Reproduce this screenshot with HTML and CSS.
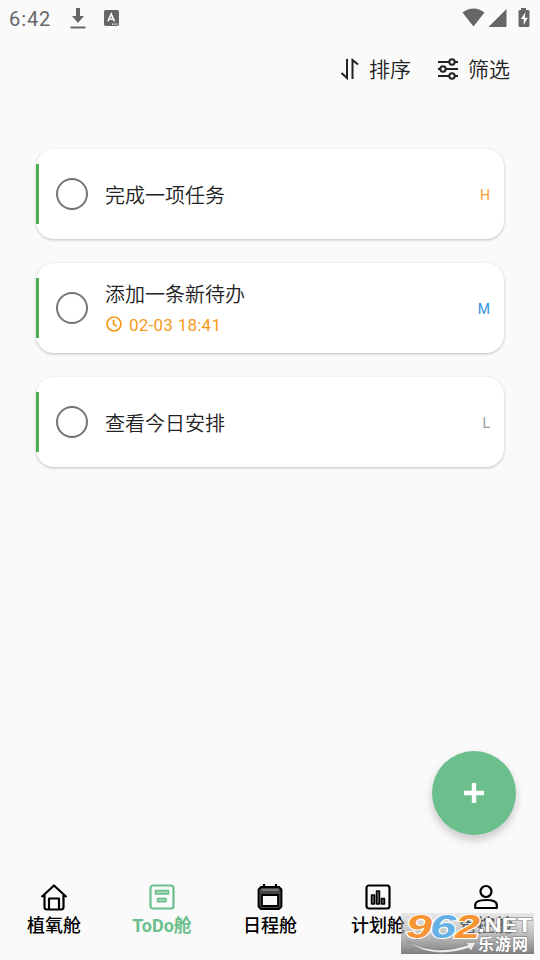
FILE: index.html
```html
<!DOCTYPE html>
<html lang="zh-CN">
<head>
<meta charset="utf-8">
<title>ToDo舱</title>
<link rel="stylesheet" href="styles.css">
</head>
<body>
<div class="app">
  <header class="status">
    <span class="clock">6:42</span>
    <svg class="download" width="16" height="21" viewBox="0 0 16 21"><path d="M6 0h4v8h4l-6 7-6-7h4zM.5 18.500h15v2H.5z"/></svg>
    <svg class="keyboard" width="15" height="16" viewBox="0 0 15 16"><rect width="15" height="16" rx="1.8"/><path d="M4 11.200 7.200 4l3.200 7.200M5 9h4.400" fill="none" stroke="#fff" stroke-width="1.600"/><path d="M8 13.500h1.200v1.200H8zM10.200 13.500h1.200v1.200h-1.200zM12.300 13.500h1.200v1.200h-1.200z" fill="#fff"/></svg>
    <svg class="signals" width="68" height="20" viewBox="0 0 68 20"><path d="M.5 4.500Q11.500-3.500 22.500 4.500L11.500 18.500zM26.500 19 44.500 1v18zM59 0h5v2h2q1.500 0 1.500 1.500v14q0 1.500-1.500 1.500h-8q-1.500 0-1.500-1.500v-14q0-1.500 1.500-1.500h1z"/><path d="m63.500 4-4.500 7h2.700v6l4-7.300h-3z" fill="#fff"/></svg>
  </header>

  <div class="toolbar">
    <button class="tool"><svg width="20" height="22" viewBox="0 0 20 22"><path d="M7 1v19L1.500 15M12.500 21V2l5.500 4.500"/></svg><span>排序</span></button>
    <button class="tool filter"><svg width="22" height="22" viewBox="0 0 22 22"><path d="M1 4h11M18 4h3M1 11h2M9 11h12M1 18h11M18 18h3"/><circle cx="15" cy="4" r="2.700"/><circle cx="6" cy="11" r="2.700"/><circle cx="15" cy="18" r="2.700"/></svg><span>筛选</span></button>
  </div>

  <main class="tasks">
    <article class="task"><i class="check"></i><div class="body"><h2>完成一项任务</h2></div><span class="level high">H</span></article>
    <article class="task"><i class="check"></i><div class="body"><h2>添加一条新待办</h2><p class="due"><svg width="16" height="16" viewBox="0 0 16 16"><circle cx="8" cy="8" r="7"/><path d="M7.600 3.700v4.500l3.400 2.200"/></svg><time>02-03 18:41</time></p></div><span class="level medium">M</span></article>
    <article class="task"><i class="check"></i><div class="body"><h2>查看今日安排</h2></div><span class="level low">L</span></article>
  </main>

  <button class="add" aria-label="+"><svg width="20" height="20" viewBox="0 0 20 20"><path d="M10 2v16M2 10h16"/></svg></button>

  <nav class="tabs">
    <a class="tab"><svg viewBox="0 0 28 28"><path d="M1.500 14 14 2.500 26.500 14M4.500 12v12q0 2.500 2.500 2.500h14q2.500 0 2.500-2.500V12M9 26V15.500h10V26"/></svg><span>植氧舱</span></a>
    <a class="tab active"><svg viewBox="0 0 28 28"><rect x="2.500" y="2.500" width="23" height="23" rx="2.500"/><path class="thin" d="M7.500 7.500h13v3.500h-13zM9.500 15.500h8.500v3.200H9.500z"/></svg><span>ToDo舱</span></a>
    <a class="tab"><svg viewBox="0 0 28 28"><path class="frame" fill-rule="evenodd" d="M5 4h18l2.500 2.500v17L23 26H5l-2.500-2.500v-17zM6 12v11h16V12z"/><path d="M8 1v4M20 1v4"/><path class="line" d="M5.500 7h17"/></svg><span>日程舱</span></a>
    <a class="tab"><svg viewBox="0 0 28 28"><rect x="2.500" y="2.500" width="23" height="23" rx="2.500"/><path class="thin" d="M7.500 12h3v9h-3zM12.500 8h3v13h-3zM17.500 15.500h3V21h-3z"/></svg><span>计划舱</span></a>
    <a class="tab"><svg viewBox="0 0 28 28"><circle cx="14" cy="8.500" r="5.500"/><path d="M3.200 25v-3q0-5 10.800-5t10.800 5v3z"/></svg><span>管控舱</span></a>
  </nav>

  <svg class="mark" width="133" height="41" viewBox="0 0 133 41">
    <defs><linearGradient id="shade" x2="0" y2="1"><stop stop-color="#bbb" stop-opacity=".3"/><stop offset=".4" stop-color="#aaa" stop-opacity=".6"/><stop offset="1" stop-color="#777" stop-opacity=".95"/></linearGradient></defs>
    <rect width="133" height="41" fill="url(#shade)"/>
    <g class="digits"><text x="5" y="25" textLength="26" lengthAdjust="spacingAndGlyphs" fill="#f79434">9</text><text x="29" y="25" textLength="26" lengthAdjust="spacingAndGlyphs" fill="#65b1e6">6</text><text x="54" y="25" textLength="25" lengthAdjust="spacingAndGlyphs" fill="#f79434">2</text></g>
    <path d="M6 28q28 16 61 4l-3-2 11-1-5 9-2-3Q30 47 6 28z" fill="#eee" stroke="#777" stroke-width=".5"/>
    <text class="net" x="77" y="19" textLength="54" lengthAdjust="spacingAndGlyphs">.NET</text>
    <text class="site" x="77" y="37" textLength="50">乐游网</text>
  </svg>
</div>
</body>
</html>
```
FILE: styles.css
```css
* { box-sizing: border-box; }
body { margin: 0; font-family: Roboto, "Noto Sans CJK SC", sans-serif; background: #fafafa; }
.app { position: relative; width: 540px; height: 960px; display: flex; flex-direction: column; overflow: hidden; color: #222; }
button { border: 0; padding: 0; background: none; font: inherit; color: inherit; }
svg { display: block; flex: none; }

.status { height: 38px; display: flex; align-items: center; padding: 0 10px 0 9px; color: #666; fill: #666; }
.clock { width: 61px; font-size: 20px; letter-spacing: .9px; }
.download { margin-top: -1px; }
.keyboard { margin: -2px 0 0 18px; }
.signals { margin: -3px 0 0 auto; }

.toolbar { height: 62px; display: flex; justify-content: flex-end; align-items: center; padding-right: 30px; gap: 26px; }
.tool { display: flex; align-items: center; gap: 9px; font-size: 21px; line-height: 30px; font-weight: 350; }
.tool span { padding-top: 2px; }
.tool svg { fill: none; stroke: #222; stroke-width: 2; }

.tasks { padding: 49px 36px 0; display: grid; gap: 24px; }
.task { height: 90px; display: flex; align-items: center; padding-right: 14px; background: #fff; border-radius: 18px; box-shadow: 0 1px 3px rgba(0, 0, 0, .24); }
.task::before { content: ""; width: 3px; height: 60px; background: #4caf50; }
.check { width: 32px; height: 32px; margin-left: 17px; border: 2px solid #757575; border-radius: 50%; }
.body { flex: 1; margin-left: 17px; padding-top: 3px; }
h2 { margin: 0; font-size: 20px; font-weight: 350; line-height: 30px; }
.due { display: flex; align-items: center; gap: 7px; margin: 1px 0 0 1px; font-size: 17px; line-height: 28px; letter-spacing: .25px; color: #f79a1c; }
.due svg { fill: none; stroke: currentColor; stroke-width: 1.7; margin-top: -2px; }
.level { font-size: 14px; padding-top: 2px; }
.high { color: #f5a02b; }
.medium { color: #2f91e0; }
.low { color: #999; }

.add { position: absolute; left: 432px; top: 751px; width: 84px; height: 84px; border-radius: 50%; display: grid; place-items: center; background: #6bbf8c; box-shadow: 0 5px 10px rgba(0, 0, 0, .2); }
.add path { stroke: #fff; stroke-width: 4.4; stroke-linecap: square; }

.tabs { margin-top: auto; height: 80px; display: grid; grid-template-columns: repeat(5, 108px); }
.tab { display: flex; flex-direction: column; align-items: center; gap: 2px; padding-top: 3px; font-size: 18px; font-weight: 500; line-height: 26px; color: #000; }
.tab svg { width: 28px; height: 28px; fill: none; stroke: currentColor; stroke-width: 2.2; stroke-linejoin: round; }
.tab .thin { stroke-width: 1.5; fill: currentColor; fill-opacity: .6; }
.tab .frame { stroke-width: 1.8; fill: #444; }
.tab .line { stroke: #aaa; stroke-width: 1; }
.active { color: #6bbf8c; font-weight: 700; }

.mark { position: absolute; left: 401px; top: 913px; font-family: "Liberation Sans", "Noto Sans CJK SC", sans-serif; font-weight: 700; }
.digits { font-size: 34px; font-style: italic; stroke: #fff; stroke-width: 2; paint-order: stroke; }
.net { font-size: 20px; fill: #fff; stroke: #777; stroke-width: 1; paint-order: stroke; }
.site { font-size: 16px; fill: #fff; stroke: #777; stroke-width: 1; paint-order: stroke; }
```
